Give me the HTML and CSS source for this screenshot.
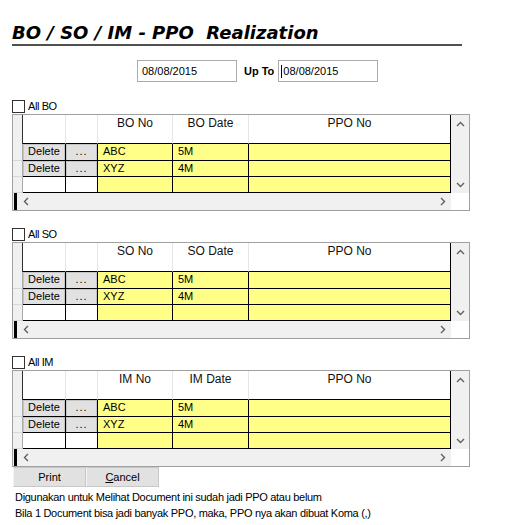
FILE: index.html
```html
<!DOCTYPE html>
<html>
<head>
<meta charset="utf-8">
<link rel="stylesheet" href="styles.css">
</head>
<body>
<div class="page">
  <h1 class="title">BO / SO / IM - PPO  Realization</h1>
  <div class="dates">
    <div class="datebox">08/08/2015</div>
    <span class="upto">Up To</span>
    <div class="datebox second"><span class="caret"></span>08/08/2015</div>
  </div>

  <section class="sec first-sec">
    <div class="chk"><span class="box"></span><span>All BO</span></div>
    <div class="grid">
      <div class="gbody">
        <div class="row head">
          <div class="rh"></div><div class="hc"></div><div class="hc"></div><div class="hc">BO No</div><div class="hc">BO Date</div><div class="hc">PPO No</div>
        </div>
        <div class="row data r1">
          <div class="rh"></div><div class="c btn">Delete</div><div class="c btn dots">...</div><div class="c y">ABC</div><div class="c y">5M</div><div class="c y"></div>
        </div>
        <div class="row data">
          <div class="rh"></div><div class="c btn">Delete</div><div class="c btn dots">...</div><div class="c y">XYZ</div><div class="c y">4M</div><div class="c y"></div>
        </div>
        <div class="row data">
          <div class="rh"></div><div class="c"></div><div class="c"></div><div class="c y"></div><div class="c y"></div><div class="c y"></div>
        </div>
      </div>
      <div class="vscroll">
        <svg width="9" height="6" viewBox="0 0 9 6"><polyline points="1,5 4.5,1.5 8,5" fill="none" stroke="#606060" stroke-width="1.4"/></svg>
        <svg width="9" height="6" viewBox="0 0 9 6"><polyline points="1,1 4.5,4.5 8,1" fill="none" stroke="#606060" stroke-width="1.4"/></svg>
      </div>
      <div class="hscroll">
        <span class="bar"></span>
        <svg width="6" height="9" viewBox="0 0 6 9"><polyline points="5,1 1.5,4.5 5,8" fill="none" stroke="#606060" stroke-width="1.4"/></svg>
        <svg class="rarr" width="6" height="9" viewBox="0 0 6 9"><polyline points="1,1 4.5,4.5 1,8" fill="none" stroke="#606060" stroke-width="1.4"/></svg>
      </div>
      <div class="corner"></div>
    </div>
  </section>

  <section class="sec">
    <div class="chk"><span class="box"></span><span>All SO</span></div>
    <div class="grid">
      <div class="gbody">
        <div class="row head">
          <div class="rh"></div><div class="hc"></div><div class="hc"></div><div class="hc">SO No</div><div class="hc">SO Date</div><div class="hc">PPO No</div>
        </div>
        <div class="row data r1">
          <div class="rh"></div><div class="c btn">Delete</div><div class="c btn dots">...</div><div class="c y">ABC</div><div class="c y">5M</div><div class="c y"></div>
        </div>
        <div class="row data">
          <div class="rh"></div><div class="c btn">Delete</div><div class="c btn dots">...</div><div class="c y">XYZ</div><div class="c y">4M</div><div class="c y"></div>
        </div>
        <div class="row data">
          <div class="rh"></div><div class="c"></div><div class="c"></div><div class="c y"></div><div class="c y"></div><div class="c y"></div>
        </div>
      </div>
      <div class="vscroll">
        <svg width="9" height="6" viewBox="0 0 9 6"><polyline points="1,5 4.5,1.5 8,5" fill="none" stroke="#606060" stroke-width="1.4"/></svg>
        <svg width="9" height="6" viewBox="0 0 9 6"><polyline points="1,1 4.5,4.5 8,1" fill="none" stroke="#606060" stroke-width="1.4"/></svg>
      </div>
      <div class="hscroll">
        <span class="bar"></span>
        <svg width="6" height="9" viewBox="0 0 6 9"><polyline points="5,1 1.5,4.5 5,8" fill="none" stroke="#606060" stroke-width="1.4"/></svg>
        <svg class="rarr" width="6" height="9" viewBox="0 0 6 9"><polyline points="1,1 4.5,4.5 1,8" fill="none" stroke="#606060" stroke-width="1.4"/></svg>
      </div>
      <div class="corner"></div>
    </div>
  </section>

  <section class="sec">
    <div class="chk"><span class="box"></span><span>All IM</span></div>
    <div class="grid">
      <div class="gbody">
        <div class="row head">
          <div class="rh"></div><div class="hc"></div><div class="hc"></div><div class="hc">IM No</div><div class="hc">IM Date</div><div class="hc">PPO No</div>
        </div>
        <div class="row data r1">
          <div class="rh"></div><div class="c btn">Delete</div><div class="c btn dots">...</div><div class="c y">ABC</div><div class="c y">5M</div><div class="c y"></div>
        </div>
        <div class="row data">
          <div class="rh"></div><div class="c btn">Delete</div><div class="c btn dots">...</div><div class="c y">XYZ</div><div class="c y">4M</div><div class="c y"></div>
        </div>
        <div class="row data">
          <div class="rh"></div><div class="c"></div><div class="c"></div><div class="c y"></div><div class="c y"></div><div class="c y"></div>
        </div>
      </div>
      <div class="vscroll">
        <svg width="9" height="6" viewBox="0 0 9 6"><polyline points="1,5 4.5,1.5 8,5" fill="none" stroke="#606060" stroke-width="1.4"/></svg>
        <svg width="9" height="6" viewBox="0 0 9 6"><polyline points="1,1 4.5,4.5 8,1" fill="none" stroke="#606060" stroke-width="1.4"/></svg>
      </div>
      <div class="hscroll">
        <span class="bar"></span>
        <svg width="6" height="9" viewBox="0 0 6 9"><polyline points="5,1 1.5,4.5 5,8" fill="none" stroke="#606060" stroke-width="1.4"/></svg>
        <svg class="rarr" width="6" height="9" viewBox="0 0 6 9"><polyline points="1,1 4.5,4.5 1,8" fill="none" stroke="#606060" stroke-width="1.4"/></svg>
      </div>
      <div class="corner"></div>
    </div>
  </section>

  <div class="actions">
    <button class="abtn">Print</button>
    <button class="abtn"><u>C</u>ancel</button>
  </div>
  <div class="notes">
    <p>Digunakan untuk Melihat Document ini sudah jadi PPO atau belum</p>
    <p>Bila 1 Document bisa jadi banyak PPO, maka, PPO nya akan dibuat Koma (,)</p>
  </div>
</div>
</body>
</html>
```

FILE: styles.css
```css
* { box-sizing: border-box; }
body {
  margin: 0;
  background: #fff;
  color: #000;
  font-family: "Liberation Sans", Arial, sans-serif;
  font-size: 11px;
}
.page { padding-left: 12px; }

.title {
  margin: 22px 0 0 0;
  width: 450px;
  font: italic bold 18px/22px "DejaVu Sans", sans-serif;
  white-space: pre;
  border-bottom: 2px solid #505050;
}

.dates {
  display: flex;
  align-items: center;
  height: 22px;
  margin: 14px 0 0 125px;
}
.datebox {
  width: 100px;
  height: 22px;
  border: 1px solid #ababab;
  padding-left: 4px;
  line-height: 20px;
  display: flex;
  align-items: center;
}
.datebox.second { padding-left: 2px; }
.caret {
  width: 1px;
  height: 13px;
  background: #000;
  margin-right: 1px;
}
.upto {
  font-weight: bold;
  margin: 0 4px 0 7px;
}

.sec { margin-top: 17px; }
.sec.first-sec { margin-top: 18px; }
.chk {
  display: flex;
  align-items: flex-start;
  height: 14px;
  line-height: 13px;
  letter-spacing: -0.4px;
}
.chk .box {
  width: 13px;
  height: 13px;
  border: 1px solid #333;
  background: #fff;
  margin-right: 3px;
}

.grid {
  width: 458px;
  border: 1px solid #a0a0a0;
  display: grid;
  grid-template-columns: 438px 18px;
  grid-template-rows: auto 17px;
}
.row {
  display: grid;
  grid-template-columns: 10px 43px 32px 75px 76px 202px;
}
.row.head { height: 29px; }
.row.head .rh {
  background: #f0f0f0;
  border-right: 1px solid #303030;
}
.hc {
  background: #fff;
  border-right: 1px solid #e6e6e6;
  border-bottom: 1px solid #000;
  text-align: center;
  font-size: 12px;
  line-height: 15px;
  padding-top: 1px;
  color: #111;
}
.row.head .hc:last-child { border-right: 1px solid #000; }

.row.data { height: 16px; }
.row.data.r1 { height: 17px; }
.row.data .rh {
  background: #f0f0f0;
  border-right: 1px solid #a8a8a8;
  border-bottom: 1px solid #d8d8d8;
}
.c {
  border-right: 1px solid #000;
  border-bottom: 1px solid #000;
  background: #fff;
  line-height: 15px;
  padding-left: 5px;
  white-space: nowrap;
}
.c.y { background: #ffff88; }
.c.btn {
  background: #e1e1e1;
  box-shadow: inset 1px 1px 0 #c4c4c4, inset -1px 0 0 #c4c4c4;
  text-align: center;
  padding-left: 0;
}
.c.dots { letter-spacing: 1px; }

.vscroll {
  background: #f0f0f0;
  display: flex;
  flex-direction: column;
  justify-content: space-between;
  align-items: center;
  padding: 6px 0 5px 0;
}
.hscroll {
  background: #f0f0f0;
  display: flex;
  align-items: center;
}
.hscroll .bar {
  width: 3px;
  height: 100%;
  background: #000;
  margin-left: 1px;
  margin-right: 6px;
}
.hscroll .rarr { margin-left: auto; margin-right: 5px; }
.corner { background: #fff; }

.actions {
  display: flex;
  margin-left: 1px;
}
.abtn {
  width: 73px;
  height: 20px;
  margin: 0;
  padding: 0;
  background: #e1e1e1;
  border: 1px solid #c8c8c8;
  border-left-color: #f4f4f4;
  font-family: "Liberation Sans", Arial, sans-serif;
  font-size: 11px;
  color: #000;
}
.notes {
  margin-top: 2px;
  padding-left: 3px;
  line-height: 16px;
  letter-spacing: -0.3px;
}
.notes p { margin: 0; }
```
